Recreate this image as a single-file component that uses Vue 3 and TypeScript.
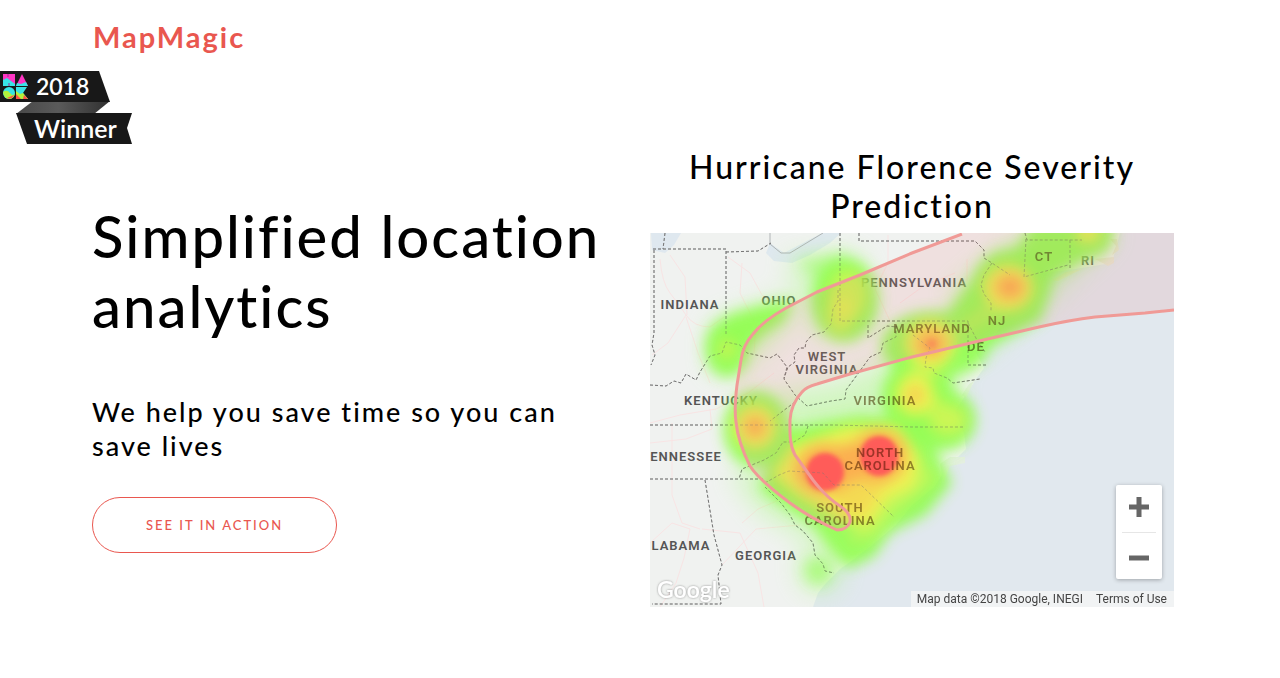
<script setup lang="ts">
interface Label {
  text: string
  x: number
  y: number
  shaded?: boolean
}

interface Hotspot {
  cx: number
  cy: number
  rx: number
  ry: number
}

const labels: Label[] = [
  { text: 'INDIANA', x: 40, y: 76 },
  { text: 'OHIO', x: 129, y: 72 },
  { text: 'PENNSYLVANIA', x: 264, y: 54 },
  { text: 'CT', x: 394, y: 28, shaded: true },
  { text: 'RI', x: 438, y: 32 },
  { text: 'NJ', x: 347, y: 92, shaded: true },
  { text: 'MARYLAND', x: 282, y: 100, shaded: true },
  { text: 'DE', x: 326, y: 118, shaded: true },
  { text: 'WEST', x: 177, y: 128 },
  { text: 'VIRGINIA', x: 177, y: 141 },
  { text: 'VIRGINIA', x: 235, y: 172, shaded: true },
  { text: 'KENTUCKY', x: 71, y: 172 },
  { text: 'ENNESSEE', x: 36, y: 228 },
  { text: 'NORTH', x: 230, y: 224, shaded: true },
  { text: 'CAROLINA', x: 230, y: 237, shaded: true },
  { text: 'SOUTH', x: 190, y: 279, shaded: true },
  { text: 'CAROLINA', x: 190, y: 292, shaded: true },
  { text: 'LABAMA', x: 31, y: 317 },
  { text: 'GEORGIA', x: 116, y: 327 },
]

const plainLabels = labels.filter((label) => !label.shaded)
const shadedLabels = labels.filter((label) => label.shaded)

const borders: string[] = [
  'M3 16H76V103M4 17V100L2 112L5 122L1 132',
  'M76 19L108 18L121 10M15 0L13 16',
  'M190 0V88H262M209 0V8H325L334 17V25L342 30L360 42',
  'M342 30L334 42L331 52L334 61L341 70V79',
  'M375 0L377 7H432M376 6L374 44L418 32M420 7V35',
  'M188 57V68L183 76L181 91L174 99L162 102L156 109L155 115L149 115L144 122L145 129L138 134L134 145',
  'M0 152L16 153L24 148L31 150L36 141L46 147L50 139L60 123L72 120L76 109L90 112L97 120L120 125L127 121L137 134L134 146L145 162L157 173L181 168L195 166L196 157L207 142L220 124L231 119L233 110L246 104V92',
  'M218 92V105L237 93L247 94',
  'M262 88H318V132H336M318 90L327 107L335 119',
  'M263 102L280 115L276 125L275 134L283 135L284 140L297 145L303 150L330 146',
  'M0 192H185L262 194H314',
  'M158 193L155 202L144 209H133L126 220L114 227L92 236L89 246',
  'M145 169L133 178L120 188',
  'M0 246H115M55 247L64 302L72 332L68 342L71 371H2',
  'M115 250L129 242L139 238L173 240L184 252H211L244 284',
  'M115 254L131 270L140 282L145 292L153 298L163 310L165 322L173 331L175 338L184 340',
]

const roads: string[] = [
  'M10 26Q12 50 20 60T36 82T60 94L74 84',
  'M36 82L18 110L2 122M37 82L35 44L20 22M36 84L48 120L60 150',
  'M78 24L100 40L112 62L130 76M92 30L90 60L106 92L104 120',
  'M0 190L30 182L66 176L98 160L124 140M60 176L62 196L36 206L0 210',
  'M22 190V262L32 290L50 296M0 310L22 290L40 296L34 325L26 350L10 374',
  'M52 296L90 300L108 340L114 374M92 290L108 276L136 264M72 332L106 296L150 292',
  'M238 2V30L225 56L240 88M250 70L275 52L305 40M317 26V48',
]

const greens: Hotspot[] = [
  { cx: 77, cy: 115, rx: 22, ry: 29 },
  { cx: 195, cy: 67, rx: 33, ry: 42 },
  { cx: 361, cy: 54, rx: 39, ry: 38 },
  { cx: 438, cy: 0, rx: 26, ry: 25 },
  { cx: 285, cy: 112, rx: 54, ry: 34 },
  { cx: 268, cy: 164, rx: 36, ry: 38 },
  { cx: 294, cy: 187, rx: 32, ry: 30 },
  { cx: 106, cy: 196, rx: 33, ry: 39 },
]

const yellows: Hotspot[] = [
  { cx: 358, cy: 55, rx: 25, ry: 23 },
  { cx: 438, cy: 0, rx: 12, ry: 9 },
  { cx: 280, cy: 110, rx: 25, ry: 23 },
  { cx: 265, cy: 162, rx: 19, ry: 20 },
  { cx: 105, cy: 194, rx: 21, ry: 22 },
]

const paleYellows: Hotspot[] = [
  { cx: 77, cy: 116, rx: 8, ry: 10 },
  { cx: 198, cy: 62, rx: 19, ry: 25 },
  { cx: 190, cy: 82, rx: 14, ry: 19 },
  { cx: 298, cy: 187, rx: 19, ry: 15 },
]

const oranges: Hotspot[] = [
  { cx: 360, cy: 54, rx: 14, ry: 12 },
  { cx: 281, cy: 111, rx: 14, ry: 13 },
  { cx: 265, cy: 162, rx: 6, ry: 6 },
  { cx: 105, cy: 194, rx: 10, ry: 10 },
  { cx: 175, cy: 236, rx: 29, ry: 25 },
  { cx: 229, cy: 223, rx: 27, ry: 26 },
  { cx: 203, cy: 229, rx: 22, ry: 19 },
]

const reds: Hotspot[] = [
  { cx: 175, cy: 239, rx: 19, ry: 19 },
  { cx: 229, cy: 223, rx: 19, ry: 20 },
]

const cone =
  'M312 1L262 20L210 42L167 59L136 75Q113 88 103 101Q93 112 91 127L87 152Q84 176 86 189Q88 209 100 233Q108 246 140 270Q162 286 187 297Q197 297 200 289C201 283 198 278 190 273Q176 264 163 247L145 222C139 211 140 198 140 187Q141 171 152 159Q156 154 167 151L200 141L262 124L329 108L389 94Q420 87 445 84L495 80L524 77'
</script>

<template>
  <div class="page">
    <header class="header">
      <a class="brand" href="#">MapMagic</a>
    </header>

    <a class="badge" href="#" aria-label="2018 Winner">
      <svg viewBox="0 0 133 75" class="badge-art">
        <defs>
          <linearGradient id="fold" x1="0" x2="1">
            <stop offset="0" stop-color="#484848" />
            <stop offset="0.45" stop-color="#5a5a5a" />
            <stop offset="1" stop-color="#303030" />
          </linearGradient>
        </defs>
        <path d="M33 31H110L94 44H16Z" fill="url(#fold)" />
        <path d="M0 1H99L110 32H0Z" fill="#181818" />
        <path d="M16 43H132L127 58L132 74H27Z" fill="#181818" />
        <path d="M3 4H15V16H3Z" fill="#ff35c4" />
        <path d="M3 10L7 8L11 11L15 14V16H3Z" fill="#38e4e6" />
        <path d="M8 4V7M9 13V16" stroke="#a02890" />
        <path d="M22 4L28 16H16Z" fill="#ff35c4" />
        <path d="M17 13L21 14L26 12L28 16H16Z" fill="#38e4e6" />
        <circle cx="9" cy="23" r="6" fill="#38e4e6" />
        <path d="M3 22Q7 19 10 23T15 23Q14 29 9 29T3 22Z" fill="#b2f23b" />
        <path d="M7 28L14 25Q12 30 7 28Z" fill="#ff5148" />
        <path d="M16 17H27L23 23L28 29H16Z" fill="#38e4e6" />
        <path d="M16 21L20 24L23 23L28 29H16Z" fill="#b2f23b" />
        <path d="M16 24L21 29H16ZM24 25L28 29H23Z" fill="#ff5148" />
        <text x="36" y="25" class="badge-text">2018</text>
        <text x="34" y="68" class="badge-text badge-title">Winner</text>
      </svg>
    </a>

    <main class="hero">
      <section class="intro">
        <h1>Simplified location analytics</h1>
        <p>We help you save time so you can save lives</p>
        <button type="button" class="action">SEE IT IN ACTION</button>
      </section>

      <section class="prediction">
        <h2>Hurricane Florence Severity Prediction</h2>
        <div class="map">
          <svg viewBox="0 0 524 374" class="map-art" role="img" aria-label="Severity heat map">
            <defs>
              <filter id="soft" x="-20%" y="-20%" width="140%" height="140%">
                <feGaussianBlur stdDeviation="7" />
              </filter>
              <filter id="wide" x="-30%" y="-30%" width="160%" height="160%">
                <feGaussianBlur stdDeviation="13" />
              </filter>
              <filter id="tight" x="-20%" y="-20%" width="140%" height="140%">
                <feGaussianBlur stdDeviation="2" />
              </filter>
              <filter id="logo-shade" x="-10%" y="-20%" width="120%" height="150%">
                <feDropShadow dx="0" dy="0" stdDeviation="1" flood-color="#777" flood-opacity="0.8" />
              </filter>
            </defs>

            <rect width="524" height="374" fill="#f0f2f0" />
            <path
              d="M470 0L462 30L425 36L378 42L368 62L352 92L340 108L325 118L334 135L326 146L313 166L305 178L314 200L316 216L296 236L284 254L262 272L246 292L222 312L204 326L190 336L176 350L168 360L163 374H524V0Z"
              fill="#e1e8ee"
            />
            <path d="M1 0H31L24 12L15 20L2 17ZM120 10L134 20L172 0H191L180 10L160 22L142 30L124 28L116 20Z" fill="#dfe8ef" />
            <path d="M402 47L416 39L432 36L422 41L408 48ZM460 6L467 6L469 17L462 22L466 13ZM445 26L464 24V30L458 33Z" fill="#eae7da" />
            <path d="M290 231L300 224H315V230L300 233L293 250ZM312 162L319 151L324 148L316 165Z" fill="#e4efdf" />

            <g class="roads">
              <path v-for="road in roads" :key="road" :d="road" />
            </g>
            <path d="M120 0V11L131 20H140L173 0" fill="none" stroke="#b0b4b6" stroke-width="1" />
            <g class="borders">
              <path v-for="border in borders" :key="border" :d="border" />
            </g>
            <g class="labels">
              <text v-for="label in plainLabels" :key="`${label.text}-${label.y}`" :x="label.x" :y="label.y">
                {{ label.text }}
              </text>
            </g>

            <g filter="url(#wide)" fill="#90ff58" opacity="0.32">
              <path d="M135 25L210 20L225 80L170 110ZM190 150L260 115L310 150L300 210L150 215L120 160ZM80 240L150 220L180 320L110 280Z" />
              <path d="M60 90L140 60L140 90L90 140H60Z" />
              <ellipse cx="170" cy="336" rx="22" ry="24" />
              <path d="M300 60L365 5L470 0L400 65L320 130Z" />
            </g>
            <g filter="url(#soft)" fill="#88ff40" opacity="0.82">
              <ellipse v-for="(spot, i) in greens" :key="i" v-bind="spot" />
              <path d="M60 98L78 82L105 74L144 66L134 88L112 102L90 124Z" />
              <path d="M146 28L195 18L205 50H172Z" opacity="0.5" />
              <path d="M323 45L368 13L385 -14H454L439 24L404 44L391 87L335 116L258 98L300 76Z" />
              <path d="M133 196L210 183L262 188L285 216L302 250L276 282L240 300L224 324L198 336L180 318L162 292L110 256L121 230L88 205Z" />
              <circle cx="168" cy="338" r="14" opacity="0.6" />
            </g>
            <g filter="url(#soft)" fill="#fff052" opacity="0.85">
              <ellipse v-for="(spot, i) in yellows" :key="i" v-bind="spot" />
              <ellipse v-for="(spot, i) in paleYellows" :key="`pale-${i}`" v-bind="spot" opacity="0.6" />
              <path d="M142 213L198 193L246 193L270 224L264 254L238 266L220 292L194 290L148 263L122 242Z" />
              <path d="M258 215L288 246L246 281L222 306L198 310L220 260Z" opacity="0.4" />
              <path d="M271 122H300L288 142L273 150L297 173L270 182L250 170L251 148Z" opacity="0.5" />
              <path d="M337 70L302 98L318 100L352 80Z" opacity="0.35" />
            </g>
            <g filter="url(#soft)" fill="#ff9850" opacity="0.75">
              <ellipse v-for="(spot, i) in oranges" :key="i" v-bind="spot" />
              <path d="M170 250L240 245L214 284L196 280Z" opacity="0.35" />
            </g>
            <g filter="url(#tight)" fill="#ff4e5c" opacity="0.85">
              <ellipse v-for="(spot, i) in reds" :key="i" v-bind="spot" />
              <circle cx="282" cy="111" r="5" opacity="0.3" />
            </g>

            <g class="borders borders-shaded">
              <path v-for="border in borders" :key="border" :d="border" />
            </g>
            <g class="labels labels-shaded">
              <text v-for="label in shadedLabels" :key="`${label.text}-${label.y}`" :x="label.x" :y="label.y">
                {{ label.text }}
              </text>
            </g>

            <path :d="`${cone}V0H312Z`" fill="#e87878" fill-opacity="0.14" />
            <path :d="cone" fill="none" stroke="#f09a96" stroke-width="3" stroke-linejoin="round" />
            <text x="7" y="365" class="google" filter="url(#logo-shade)">Google</text>
          </svg>

          <div class="zoom">
            <button type="button" aria-label="Zoom in">
              <svg viewBox="0 0 22 22"><path d="M11 1V21M1 11H21" /></svg>
            </button>
            <button type="button" aria-label="Zoom out">
              <svg viewBox="0 0 22 22"><path d="M1 11H21" /></svg>
            </button>
          </div>
          <div class="credits">
            <span>Map data ©2018 Google, INEGI</span>
            <a href="#">Terms of Use</a>
          </div>
        </div>
      </section>
    </main>
  </div>
</template>

<style>
body {
  background: #fff;
}
</style>

<style scoped>
.page {
  position: relative;
  color: #000;
  font-family: Lato, "Open Sans", sans-serif;
}

.header {
  display: flex;
  align-items: center;
  height: 72px;
  padding: 0 93px;
}

.brand {
  color: #e9574f;
  font-size: 29px;
  font-weight: 700;
  letter-spacing: 2px;
  text-decoration: none;
}

.badge {
  position: absolute;
  top: 70px;
  left: 0;
}

.badge-art {
  display: block;
  width: 133px;
  height: 75px;
}

.badge-text {
  fill: #fff;
  font-size: 23px;
  font-weight: 600;
}

.badge-title {
  font-size: 25px;
}

.hero {
  display: grid;
  grid-template-columns: minmax(0, 1fr) minmax(0, 1fr);
  gap: 34px;
  align-items: center;
  padding: 75px 106px 70px 92px;
}

h1,
h2,
p {
  margin: 0;
  font-weight: 500;
}

h1 {
  font-size: 58px;
  line-height: 70px;
  letter-spacing: 2px;
}

p {
  margin-top: 54px;
  padding-right: 32px;
  font-size: 27px;
  line-height: 34px;
  letter-spacing: 2px;
}

.action {
  margin-top: 34px;
  padding: 0 53px;
  height: 56px;
  border: 1px solid #e9574f;
  border-radius: 28px;
  background: transparent;
  color: #e9574f;
  font-family: inherit;
  font-size: 13px;
  font-weight: 500;
  letter-spacing: 2px;
}

h2 {
  margin-bottom: 8px;
  font-size: 32px;
  line-height: 39px;
  letter-spacing: 2px;
  text-align: center;
}

.map {
  position: relative;
  overflow: hidden;
  font-family: Roboto, sans-serif;
}

.map-art {
  display: block;
  width: 100%;
}

.roads path {
  fill: none;
  stroke: #f8e4e4;
  stroke-width: 1;
}

.borders path {
  fill: none;
  stroke: #777;
  stroke-width: 1;
  stroke-dasharray: 3 2;
}

.borders-shaded {
  opacity: 0.4;
}

.labels text {
  fill: #555;
  font-size: 13px;
  font-weight: 600;
  letter-spacing: 1px;
  text-anchor: middle;
}

.labels-shaded {
  mix-blend-mode: multiply;
}

.labels-shaded text {
  fill: #9e8c70;
}

.google {
  fill: #fff;
  font-family: Lato, sans-serif;
  font-size: 23px;
  font-weight: 600;
}

.zoom {
  position: absolute;
  right: 12px;
  bottom: 28px;
  display: flex;
  flex-direction: column;
  width: 46px;
  border-radius: 2px;
  background: #fff;
  box-shadow: 0 1px 4px rgba(0, 0, 0, 0.3);
}

.zoom button {
  display: flex;
  align-items: center;
  justify-content: center;
  height: 47px;
  margin: 0 6px;
  padding: 0 0 4px;
  border: 0;
  background: none;
}

.zoom button + button {
  border-top: 1px solid #e6e6e6;
  padding: 4px 0 0;
}

.zoom svg {
  width: 22px;
  height: 22px;
  fill: none;
  stroke: #666;
  stroke-width: 5;
}

.credits {
  position: absolute;
  right: 0;
  bottom: 0;
  display: flex;
  gap: 13px;
  padding: 0 7px 0 6px;
  background: rgba(245, 245, 245, 0.8);
  color: #444;
  font-size: 12px;
  line-height: 16px;
}

.credits a {
  color: inherit;
  text-decoration: none;
}
</style>
